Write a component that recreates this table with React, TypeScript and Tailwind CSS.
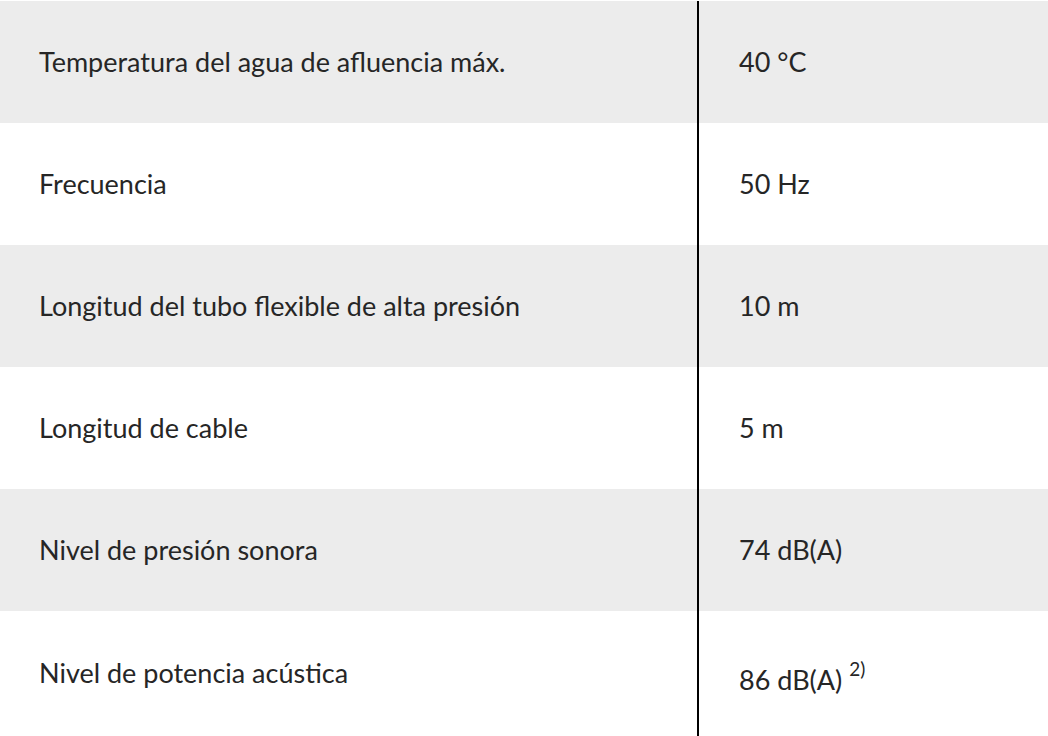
import React from "react";

const rows: { label: string; value: React.ReactNode }[] = [
  { label: "Temperatura del agua de afluencia máx.", value: "40 °C" },
  { label: "Frecuencia", value: "50 Hz" },
  { label: "Longitud del tubo flexible de alta presión", value: "10 m" },
  { label: "Longitud de cable", value: "5 m" },
  { label: "Nivel de presión sonora", value: "74 dB(A)" },
  {
    label: "Nivel de potencia acústica",
    value: (
      <span className="pt-[14px]">
        86 dB(A) <sup className="text-[19px] top-[-0.75em]">2)</sup>
      </span>
    ),
  },
];

export default function App() {
  return (
    <div
      className="w-[1048px] h-[736px] overflow-hidden bg-white pt-px text-[#262626] flex flex-col"
      style={{ fontFamily: "Lato, 'Noto Sans', sans-serif" }}
    >
      {rows.map((r, i) => (
        <div
          key={i}
          className={`flex ${i === rows.length - 1 ? "flex-1" : "h-[122px]"} ${
            i % 2 === 0 ? "bg-[#ececec]" : "bg-white"
          }`}
        >
          <div className="w-[697px] flex items-center pl-[39px] text-[27px] font-normal">
            {r.label}
          </div>
          <div className="w-[2px] bg-black" />
          <div className="flex-1 flex items-center pl-[40px] text-[27px] font-normal">
            {r.value}
          </div>
        </div>
      ))}
    </div>
  );
}
